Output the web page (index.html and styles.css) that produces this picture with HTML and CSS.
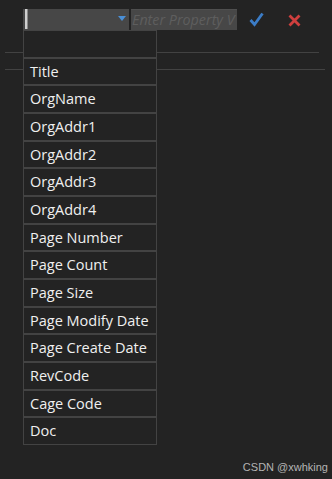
FILE: index.html
```html
<!DOCTYPE html>
<html>
<head>
    <meta charset="utf-8">
    <title>Property picker</title>
    <link rel="stylesheet" href="styles.css">
</head>
<body>
    <div class="toolbar">
        <div class="combo">
            <span class="caret"></span>
            <svg class="arrow" width="8" height="5" viewBox="0 0 8 5"><path d="M0 0H8L4 5Z" fill="#4a8fd6"/></svg>
            <ul class="dropdown">
                <li></li>
                <li>Title</li>
                <li>OrgName</li>
                <li>OrgAddr1</li>
                <li>OrgAddr2</li>
                <li>OrgAddr3</li>
                <li>OrgAddr4</li>
                <li>Page Number</li>
                <li>Page Count</li>
                <li>Page Size</li>
                <li>Page Modify Date</li>
                <li>Page Create Date</li>
                <li>RevCode</li>
                <li>Cage Code</li>
                <li>Doc</li>
            </ul>
        </div>
        <div class="value">Enter Property V</div>
        <svg class="ok" width="15" height="15" viewBox="0 0 15 15"><path d="M1.5 8L5.5 12.5L13.5 1.5" fill="none" stroke="#3b7cc6" stroke-width="2.8"/></svg>
        <svg class="cancel" width="13" height="13" viewBox="0 0 13 13"><path d="M1.5 1.5L11.5 11.5M11.5 1.5L1.5 11.5" fill="none" stroke="#cf3f3e" stroke-width="2.8"/></svg>
    </div>
    <div class="rule first"></div>
    <div class="rule second"></div>
    <div class="mark">CSDN @xwhking</div>
</body>
</html>
```

FILE: styles.css
```css
html, body {
    margin: 0;
    height: 100%;
}

body {
    background-color: #232323;
    font: 14.5px "Open Sans", "Noto Sans", sans-serif;
    color: #f0f0f0;
    position: relative;
    overflow: hidden;
}

.toolbar {
    display: flex;
    align-items: center;
    padding: 9px 0 0 23px;
    height: 21px;
}

.combo {
    position: relative;
    width: 106px;
    height: 21px;
    background-color: #474747;
}

.combo .caret {
    position: absolute;
    left: 2px;
    top: 0;
    width: 2px;
    height: 20px;
    background-color: #cfcfcf;
    border-right: 1px solid #8a8a8a;
}

.combo .arrow {
    position: absolute;
    left: 95px;
    top: 7px;
}

.value {
    width: 105px;
    height: 20px;
    margin-left: 2px;
    padding-left: 1px;
    background-color: #474747;
    border-top: 1px solid #4f4f4f;
    color: #5e5e5e;
    font-style: italic;
    font-size: 14.3px;
    line-height: 20px;
    white-space: nowrap;
    overflow: hidden;
}

.ok {
    margin-left: 12px;
}

.cancel {
    margin-left: 24px;
    margin-top: 1px;
}

.dropdown {
    position: absolute;
    left: 0;
    top: 21px;
    width: 134px;
    margin: 0;
    padding: 0;
    list-style: none;
    background-color: #232323;
    z-index: 2;
}

.dropdown li {
    box-sizing: border-box;
    height: 27.67px;
    padding-left: 6px;
    border: 1px solid #434343;
    line-height: 25px;
    white-space: nowrap;
}

.rule {
    height: 1px;
    margin-left: 5px;
    background-color: #424242;
}

.rule.first {
    width: 314px;
    margin-top: 22px;
}

.rule.second {
    width: 320px;
    margin-top: 16px;
}

.mark {
    position: absolute;
    right: 4px;
    bottom: 6px;
    font: 11px "Liberation Sans", Arial, sans-serif;
    color: #b4b4b4;
}
```
